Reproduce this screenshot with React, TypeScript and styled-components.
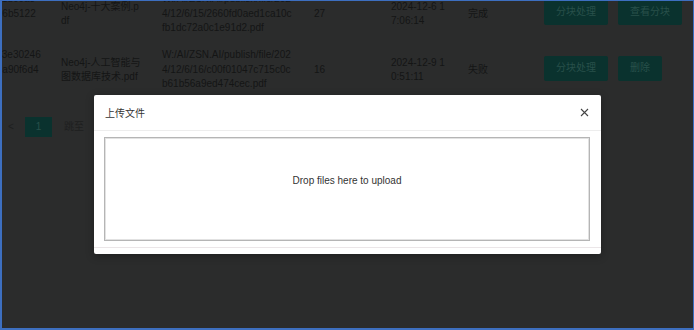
import React from 'react';
import styled, { createGlobalStyle } from 'styled-components';

const GlobalStyle = createGlobalStyle`
  html, body {
    margin: 0;
    padding: 0;
    background: #2b2c2c;
  }
  body {
    font-family: 'Liberation Sans', 'Noto Sans CJK SC', sans-serif;
  }
`;

const Frame = styled.div`
  position: relative;
  box-sizing: border-box;
  width: 694px;
  height: 330px;
  overflow: hidden;
  border-top: 1px solid #3d6fc0;
  border-left: 2px solid #3d6fc0;
  border-right: 1px solid #3d6fc0;
  border-bottom: 2px solid #3d6fc0;
  background: #2b2c2c;
`;

const Page = styled.div`
  display: flex;
  flex-direction: column;
  color: #141515;
  font-size: 10px;
  line-height: 14.5px;
`;

const Table = styled.div`
  display: flex;
  flex-direction: column;
  margin: -15px 0 0 -33px;
`;

const Row = styled.div`
  display: flex;
  align-items: center;
  height: 56px;
`;

const Cell = styled.div<{ $w: number; $pad?: number }>`
  flex: 0 0 ${p => p.$w}px;
  padding-right: ${p => p.$pad ?? 0}px;
  word-break: break-all;
`;

const IdLine = styled.div`
  white-space: nowrap;
`;

const Actions = styled.div`
  display: flex;
  gap: 10px;
  margin-top: -3px;
`;

const ActionButton = styled.div`
  height: 25px;
  padding: 0 12px;
  display: flex;
  align-items: center;
  border-radius: 2px;
  background: #0a322e;
  color: #28504a;
  font-size: 10px;
`;

const Pager = styled.div`
  display: flex;
  align-items: center;
  margin-top: 19px;
  padding-left: 6px;
  height: 20px;
  color: #1e1f1f;
  font-size: 10px;
`;

const PagerArrow = styled.span`
  width: 17px;
`;

const PagerItem = styled.span<{ $active?: boolean }>`
  display: flex;
  align-items: center;
  justify-content: center;
  width: 27px;
  height: 20px;
  margin-right: 12px;
  background: ${p => (p.$active ? '#0a322e' : 'transparent')};
  color: ${p => (p.$active ? '#28504a' : '#1e1f1f')};
`;

const Mask = styled.div`
  position: absolute;
  inset: 0;
  display: flex;
  justify-content: center;
  align-items: flex-start;
  padding-top: 94px;
`;

const Modal = styled.div`
  width: 507px;
  background: #fff;
  border-radius: 2px;
  box-shadow: 0 2px 8px rgba(0, 0, 0, 0.3);
  display: flex;
  flex-direction: column;
`;

const ModalHeader = styled.div`
  height: 35px;
  display: flex;
  align-items: center;
  justify-content: space-between;
  padding: 0 12px 0 11px;
  border-bottom: 1px solid #ededed;
  color: #333;
  font-size: 10px;
`;

const CloseButton = styled.span`
  display: flex;
  width: 10px;
  height: 10px;
  align-items: center;
  justify-content: center;
`;

const ModalBody = styled.div`
  padding: 6px 11px 6px 10px;
`;

const DropZone = styled.div`
  box-sizing: border-box;
  height: 104px;
  padding-top: 36px;
  border: 1px solid #b5b5b5;
  box-shadow: inset 0 0 0 1px #e2e2e2;
  text-align: center;
  line-height: 14.5px;
  color: #333;
  font-size: 10px;
`;

const ModalFooter = styled.div`
  height: 6px;
  border-top: 1px solid #ebe6e8;
`;

const rows = [
  {
    id: ['b7e2c41d09a8', '4d71e06b5122', '9c'],
    name: 'Neo4j-十大案例.pdf',
    path: 'W:/AI/ZSN.AI/publish/file/2024/12/6/15/2660fd0aed1ca10cfb1dc72a0c1e91d2.pdf',
    count: 27,
    time: '2024-12-6 17:06:14',
    status: '完成',
    actions: ['分块处理', '查看分块'],
  },
  {
    id: ['95ac7b3e30246', '1d8e2ea90f6d4', 'c7'],
    name: 'Neo4j-人工智能与图数据库技术.pdf',
    path: 'W:/AI/ZSN.AI/publish/file/2024/12/6/16/c00f01047c715c0cb61b56a9ed474cec.pdf',
    count: 16,
    time: '2024-12-9 10:51:11',
    status: '失败',
    actions: ['分块处理', '删除'],
  },
];

const App = () => {
  return (
    <Frame>
      <GlobalStyle />
      <Page>
        <Table>
          {rows.map(r => (
            <Row key={r.id[0]}>
              <Cell $w={72} $pad={20}>
                {r.id.map(line => (
                  <IdLine key={line}>{line}</IdLine>
                ))}
              </Cell>
              <Cell $w={81} $pad={20}>
                {r.name}
              </Cell>
              <Cell $w={131} $pad={21}>
                {r.path}
              </Cell>
              <Cell $w={77}>{r.count}</Cell>
              <Cell $w={56} $pad={21}>
                {r.time}
              </Cell>
              <Cell $w={76}>{r.status}</Cell>
              <Cell $w={170}>
                <Actions>
                  {r.actions.map(a => (
                    <ActionButton key={a}>{a}</ActionButton>
                  ))}
                </Actions>
              </Cell>
            </Row>
          ))}
        </Table>
        <Pager>
          <PagerArrow>&lt;</PagerArrow>
          <PagerItem $active>1</PagerItem>
          <span>跳至</span>
        </Pager>
      </Page>
      <Mask>
        <Modal>
          <ModalHeader>
            <span>上传文件</span>
            <CloseButton>
              <svg width="9" height="9" viewBox="0 0 9 9">
                <path d="M1 1L8 8M8 1L1 8" stroke="#444" strokeWidth="1.1" />
              </svg>
            </CloseButton>
          </ModalHeader>
          <ModalBody>
            <DropZone>Drop files here to upload</DropZone>
          </ModalBody>
          <ModalFooter />
        </Modal>
      </Mask>
    </Frame>
  );
};

export default App;
